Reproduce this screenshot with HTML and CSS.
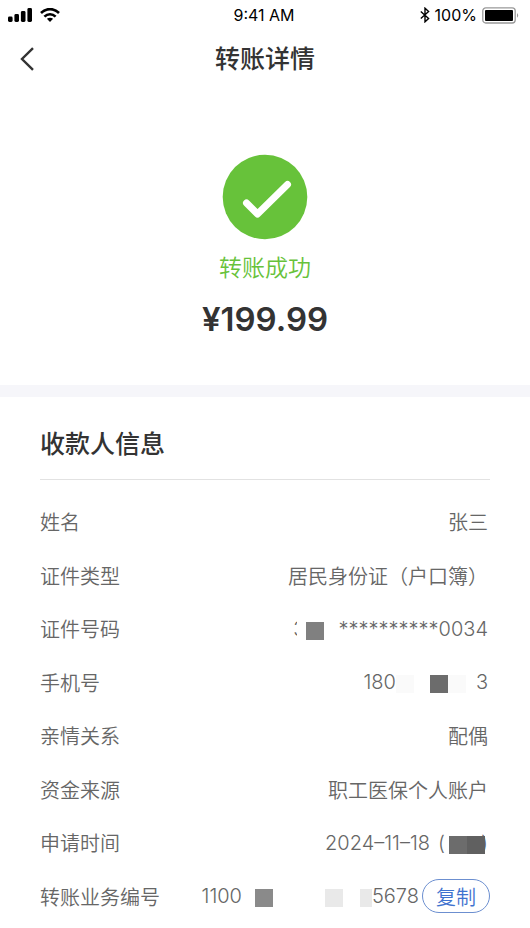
FILE: index.html
```html
<!DOCTYPE html>
<html lang="zh-CN">
<head>
<meta charset="utf-8">
<meta name="viewport" content="width=device-width, initial-scale=1">
<title>转账详情</title>
<link rel="stylesheet" href="styles.css">
</head>
<body>
<div class="status">
  <div class="status-side">
    <svg width="24" height="14" viewBox="0 0 24 14" aria-hidden="true">
      <rect x="0" y="8.5" width="4.6" height="5.5" rx="1.4"/>
      <rect x="6.4" y="6" width="4.6" height="8" rx="1.4"/>
      <rect x="12.9" y="3" width="4.6" height="11" rx="1.4"/>
      <rect x="19.4" y="0" width="4.6" height="14" rx="1.4"/>
    </svg>
    <svg width="20" height="14" viewBox="0 0 20 14" aria-hidden="true">
      <g fill="none" stroke="#000" stroke-width="2.6">
        <path d="M1 5C6-.2 14-.2 19 5"/>
        <path d="M4.4 8.6C7.6 5.4 12.4 5.4 15.6 8.6"/>
      </g>
      <path d="M6.9 10.8Q10 8.5 13.1 10.8L10 14Z"/>
    </svg>
  </div>
  <time class="clock">9:41 AM</time>
  <div class="status-side status-right">
    <svg width="10" height="16" viewBox="0 0 10 16" fill="none" stroke="#000" stroke-width="1.4" aria-hidden="true">
      <path d="M.8 4.4 8.6 11.4 5 14.8V1.2L8.6 4.6.8 11.6"/>
    </svg>
    <span>100%</span>
    <svg class="battery" width="38" height="17" viewBox="0 0 38 17" aria-hidden="true">
      <rect x=".8" y=".8" width="32.4" height="15.2" rx="3" fill="#fff" stroke="#999" stroke-width="1.3"/>
      <rect x="3" y="3" width="28" height="11" rx="1"/>
      <path d="M35 6Q37.4 8.4 35 10.8Z" fill="#999"/>
    </svg>
  </div>
</div>

<header class="nav">
  <button class="back" type="button" aria-label="返回">
    <svg width="15" height="24" viewBox="0 0 15 24" fill="none" stroke="#333" stroke-width="2.4" aria-hidden="true"><path d="M13 1.2 2 12 13 22.8"/></svg>
  </button>
  <h1>转账详情</h1>
</header>

<main>
  <section class="result">
    <svg width="86" height="86" viewBox="0 0 86 86" aria-hidden="true">
      <circle cx="43" cy="43" r="42.3" fill="#67c23a"/>
      <path d="M24.5 49 35.5 60 65.5 30.5" fill="none" stroke="#fff" stroke-width="7" stroke-linecap="round" stroke-linejoin="round"/>
    </svg>
    <p class="state">转账成功</p>
    <p class="amount">¥199.99</p>
  </section>

  <section class="payee">
    <h2>收款人信息</h2>
    <dl>
      <div class="row"><dt>姓名</dt><dd>张三</dd></div>
      <div class="row"><dt>证件类型</dt><dd>居民身份证（户口簿）</dd></div>
      <div class="row"><dt>证件号码</dt><dd><span>3</span><i class="cell blank"></i><i class="cell mid"></i><span>**********0034</span></dd></div>
      <div class="row"><dt>手机号</dt><dd><span>180</span><i class="cell faint phone-gap"></i><i class="cell dark"></i><i class="cell faint phone-end"></i><span>3</span></dd></div>
      <div class="row"><dt>亲情关系</dt><dd>配偶</dd></div>
      <div class="row"><dt>资金来源</dt><dd>职工医保个人账户</dd></div>
      <div class="row"><dt>申请时间</dt><dd><span class="date">2024–11–18</span><span class="open">(</span><i class="cell dark"></i><i class="cell darker"></i><span class="close">)</span></dd></div>
      <div class="row serial"><dt>转账业务编号</dt><dd><span>1100</span><i class="cell light-mid"></i><i class="cell pale serial-gap"></i><i class="cell pale short"></i><span>5678</span><button class="copy" type="button">复制</button></dd></div>
    </dl>
  </section>
</main>
</body>
</html>
```
FILE: styles.css
```css
* { box-sizing: border-box; }
body {
  margin: 0;
  background: #fff;
  color: #666;
  font-family: Inter, "Noto Sans CJK SC", sans-serif;
}
h1, h2, p, dl, dd { margin: 0; }
button { padding: 0; font: inherit; background: none; cursor: pointer; }
svg { display: block; flex: none; }

.status {
  display: grid;
  grid-template-columns: 1fr auto 1fr;
  align-items: center;
  height: 30px;
  padding: 0 10px 0 8px;
  color: #000;
  font-size: 16px;
}
.status-side { display: flex; align-items: center; gap: 8px; }
.status-right { justify-content: flex-end; gap: 5px; }

.nav {
  display: grid;
  grid-template-columns: 1fr auto 1fr;
  align-items: center;
  height: 58px;
  padding: 0 20px;
}
.back { justify-self: start; border: 0; }
h1 { color: #333; font-size: 25px; font-weight: 500; line-height: 36px; }

.result {
  display: flex;
  flex-direction: column;
  align-items: center;
  padding: 66px 0 45px;
  border-bottom: 12px solid #f6f6fa;
}
.state { margin-top: 12px; color: #67c23a; font-size: 23px; font-weight: 350; line-height: 32px; }
.amount { margin-top: 14px; color: #333; font-size: 33px; font-weight: 600; line-height: 42px; }

.payee { padding: 27px 40px 4px; }
h2 {
  padding-bottom: 15px;
  border-bottom: 1px solid #e2e2e2;
  color: #333;
  font-size: 25px;
  font-weight: 500;
  line-height: 40px;
}
dl {
  display: grid;
  grid-auto-rows: 1fr;
  min-height: 428px;
  margin-top: 15px;
  font-size: 20px;
  font-weight: 350;
}
.row { display: flex; align-items: center; justify-content: space-between; padding-right: 2px; }
dd { display: flex; align-items: center; }
.serial { padding-right: 0; }

.cell { position: relative; width: 18px; height: 18px; margin-top: 4px; }
.blank { height: 24px; margin-top: 0; margin-left: -8px; margin-right: -9px; background: #fff; }
.mid { margin-right: 14px; background: #808080; }
.light-mid { margin-left: 13px; margin-right: 52px; background: #8a8a8a; }
.dark { background: #6c6c6c; }
.darker { background: #606060; }
.pale { background: #e9e9e9; }
.faint { background: #fafafa; }
.phone-gap { margin-right: 16px; }
.phone-end { margin-right: 10px; }
.date { margin-right: 8px; }
.open { margin-right: 4px; }
.close { margin-left: -4px; }
.serial-gap { margin-right: 17px; }
.short { width: 12px; }
.copy {
  width: 68px;
  height: 34px;
  margin-left: 3px;
  border: 1px solid #6c8fd0;
  border-radius: 17px;
  color: #3f73cf;
}
```
